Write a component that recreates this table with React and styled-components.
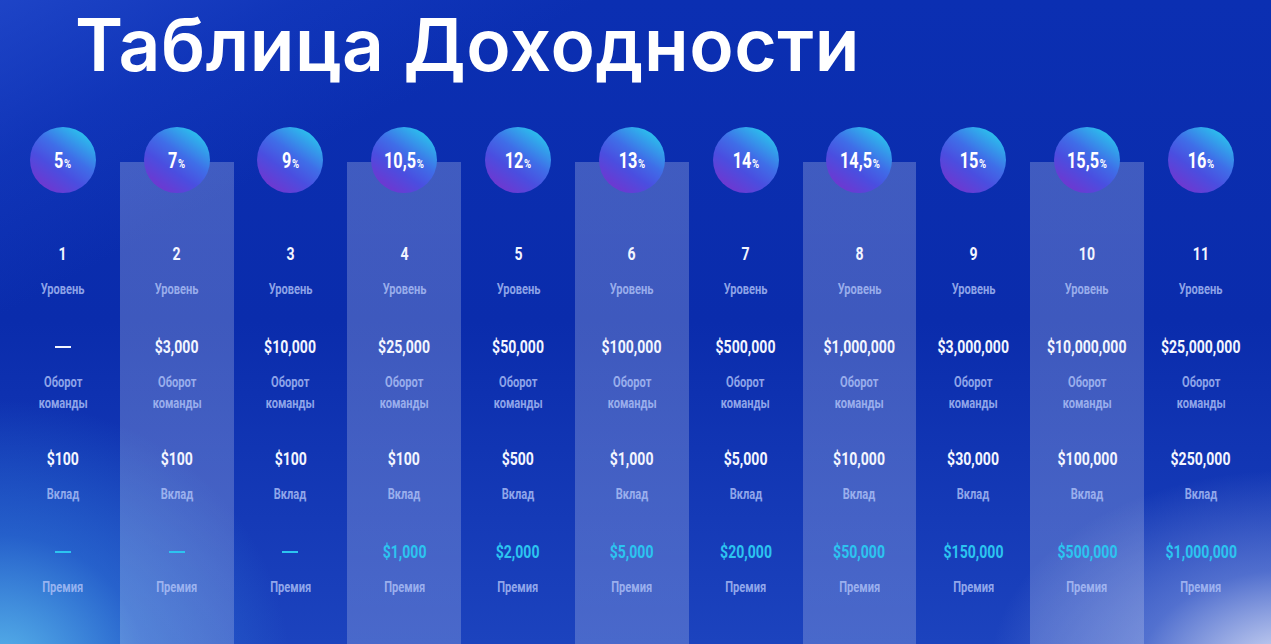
import styled, { createGlobalStyle } from "styled-components";

const GlobalStyle = createGlobalStyle`
  html, body {
    margin: 0;
    padding: 0;
    background: #0a2eb0;
  }
  * {
    box-sizing: border-box;
  }
`;

const levels = [
  { rate: "5", turnover: "—", deposit: "$100", bonus: "—" },
  { rate: "7", turnover: "$3,000", deposit: "$100", bonus: "—" },
  { rate: "9", turnover: "$10,000", deposit: "$100", bonus: "—" },
  { rate: "10,5", turnover: "$25,000", deposit: "$100", bonus: "$1,000" },
  { rate: "12", turnover: "$50,000", deposit: "$500", bonus: "$2,000" },
  { rate: "13", turnover: "$100,000", deposit: "$1,000", bonus: "$5,000" },
  { rate: "14", turnover: "$500,000", deposit: "$5,000", bonus: "$20,000" },
  { rate: "14,5", turnover: "$1,000,000", deposit: "$10,000", bonus: "$50,000" },
  { rate: "15", turnover: "$3,000,000", deposit: "$30,000", bonus: "$150,000" },
  { rate: "15,5", turnover: "$10,000,000", deposit: "$100,000", bonus: "$500,000" },
  { rate: "16", turnover: "$25,000,000", deposit: "$250,000", bonus: "$1,000,000" },
];

// a missing amount is drawn as a wide dash, not squeezed like the figures
const Amount = ({ children }) =>
  children === "—" ? <Dash /> : <Narrow>{children}</Narrow>;

const App = () => {
  return (
    <Page>
      <GlobalStyle />
      <Title>Таблица Доходности</Title>
      <Table>
        {levels.map((l, i) => (
          <Column key={i} $shaded={i % 2 === 1}>
            <Badge>
              <Narrow>
                {l.rate}
                <small>%</small>
              </Narrow>
            </Badge>
            <Stat>
              <Value>
                <Narrow>{i + 1}</Narrow>
              </Value>
              <Label>
                <Narrow>Уровень</Narrow>
              </Label>
            </Stat>
            <Stat>
              <Value>
                <Amount>{l.turnover}</Amount>
              </Value>
              <Label>
                <Narrow>
                  Оборот
                  <br />
                  команды
                </Narrow>
              </Label>
            </Stat>
            <Stat $tight>
              <Value>
                <Amount>{l.deposit}</Amount>
              </Value>
              <Label>
                <Narrow>Вклад</Narrow>
              </Label>
            </Stat>
            <Stat>
              <Value $accent>
                <Amount>{l.bonus}</Amount>
              </Value>
              <Label>
                <Narrow>Премия</Narrow>
              </Label>
            </Stat>
          </Column>
        ))}
      </Table>
    </Page>
  );
};

export default App;

const Page = styled.div`
  width: 100vw;
  height: 644px;
  overflow: hidden;
  background:
    radial-gradient(ellipse 290px 270px at 0px 670px, rgba(95, 195, 240, 0.9), rgba(60, 150, 230, 0.4) 50%, rgba(10, 46, 176, 0) 100%),
    radial-gradient(ellipse 300px 200px at 1290px 670px, rgba(225, 230, 248, 0.98), rgba(150, 170, 230, 0.45) 50%, rgba(10, 46, 176, 0) 100%),
    linear-gradient(152deg, rgba(45, 85, 215, 0.55) 0%, rgba(30, 70, 205, 0.3) 12%, rgba(10, 46, 176, 0) 24%),
    linear-gradient(180deg, #0b2fb2 0%, #0a2cac 50%, #1c43be 100%);
`;

const Title = styled.h1`
  margin: 0;
  padding: 0 0 0 75px;
  height: 127px;
  font-family: Inter, "Liberation Sans", sans-serif;
  font-weight: 600;
  font-size: 73px;
  line-height: 89px;
  letter-spacing: 0.6px;
  color: #ffffff;
`;

const Table = styled.div`
  display: grid;
  grid-template-columns: repeat(11, 113.8px);
  padding-left: 6px;
  height: 517px;
`;

const Column = styled.div`
  display: flex;
  flex-direction: column;
  align-items: center;
  background: ${(p) =>
    p.$shaded
      ? "linear-gradient(180deg, transparent 35px, rgba(255, 255, 255, 0.22) 35px, rgba(255, 255, 255, 0.2) 100%)"
      : "transparent"};
`;

const Narrow = styled.span`
  display: inline-block;
  transform: scaleX(0.74);
  transform-origin: center;
  white-space: nowrap;
`;

const Dash = styled.span`
  display: block;
  width: 16px;
  height: 2px;
  margin: 11px 0;
  background: currentColor;
`;

const Badge = styled.div`
  width: 66px;
  height: 66px;
  border-radius: 50%;
  display: flex;
  align-items: center;
  justify-content: center;
  margin-bottom: 14px;
  background: linear-gradient(215deg, #1ee8ee 0%, #2fb0ec 18%, #3f6ee8 42%, #4a4ee0 62%, #6a3ad2 84%, #8a2cc0 100%);
  font-family: Roboto, "Liberation Sans", sans-serif;
  font-weight: 700;
  font-size: 22px;
  color: #ffffff;
  small {
    font-size: 13px;
    margin-left: 1px;
  }
`;

const Stat = styled.div`
  display: flex;
  flex-direction: column;
  align-items: center;
  margin-top: ${(p) => (p.$tight ? "33px" : "35px")};
`;

const Value = styled.div`
  font-family: Roboto, "Liberation Sans", sans-serif;
  font-weight: 700;
  font-size: 19px;
  line-height: 24px;
  color: ${(p) => (p.$accent ? "#2cc4f0" : "#f2f5ff")};
`;

const Label = styled.div`
  margin-top: 13px;
  font-family: Roboto, "Liberation Sans", sans-serif;
  font-weight: 700;
  font-size: 15px;
  line-height: 21px;
  text-align: center;
  color: rgba(178, 196, 248, 0.8);
`;
